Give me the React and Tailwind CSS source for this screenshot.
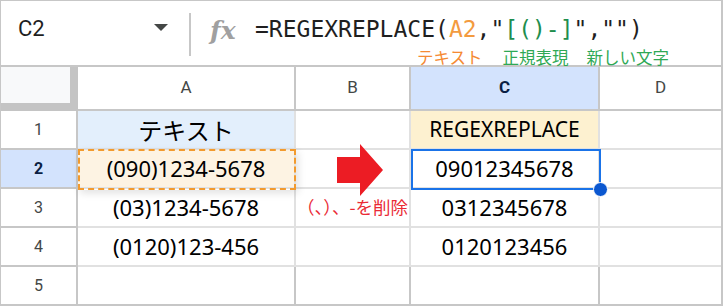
import React from 'react';

const hdrLine = 'border-[#c7c7c7]';
const gridLine = 'border-[#e1e1e1]';

const RowHeader = ({ n, active }) => (
  <div
    className={`w-[77px] shrink-0 flex items-center justify-center border-r-2 border-b-2 ${hdrLine} text-[16px] font-['Roboto'] ${
      active ? 'bg-[#d3e3fd] text-[#0b1f44] font-bold' : 'text-[#444746]'
    }`}
  >
    {n}
  </div>
);

const Cell = ({ w, children, className = '', last, noRight }) => (
  <div
    className={`${w} shrink-0 flex items-center justify-center border-b-2 ${noRight ? '' : 'border-r-2'} ${
      last ? hdrLine : gridLine
    } ${className}`}
  >
    {children}
  </div>
);

const Row = ({ n, active, last, cells }) => (
  <div className="flex h-[39px]">
    <RowHeader n={n} active={active} />
    <Cell w="w-[218px]" last={last} className={cells[0].cls}>{cells[0].body}</Cell>
    <Cell w="w-[115px]" last={last} className={cells[1].cls}>{cells[1].body}</Cell>
    <Cell w="w-[189px]" last={last} className={cells[2].cls}>{cells[2].body}</Cell>
    <Cell w="flex-1" last={last} noRight className={cells[3].cls}>{cells[3].body}</Cell>
  </div>
);

const num = "font-['Noto_Sans','Noto_Sans_CJK_JP',sans-serif] text-[22px] text-black";
const empty = { cls: '', body: null };

export default function App() {
  return (
    <div className="w-[724px] h-[307px] bg-white overflow-hidden">
      <div className="relative w-[723px] border-l border-t border-r-2 border-[#c7c7c7]">
        {/* Formula bar */}
        <div className={`flex h-[66px] border-b-2 ${hdrLine}`}>
          <div className="w-[188px] flex items-start pl-[17px] pt-[14px]">
            <span className="text-[22px] font-['Roboto'] text-[#1f1f1f] leading-[28px]">C2</span>
            <span className="ml-auto mr-[21px] mt-[9px] w-0 h-0 border-l-[7px] border-r-[7px] border-t-[7px] border-l-transparent border-r-transparent border-t-[#444746]" />
          </div>
          <div className="w-[2px] h-[43px] mt-[12px] bg-[#c7c7c7]" />
          <div className="w-[64px] pl-[19px] pt-[15px]">
            <span className="font-['DejaVu_Serif'] italic font-bold text-[25px] leading-[30px] text-[#a0a0a0]">fx</span>
          </div>
          <div className="flex flex-col pt-[14px]">
            <div className="font-['DejaVu_Sans_Mono'] text-[23px] leading-[28px] text-[#1f1f1f] whitespace-pre">
              {'=REGEXREPLACE('}
              <span className="text-[#f39b3f]">A2</span>
              {',"'}
              <span className="text-[#1e8e4e]">[()-]</span>
              {'","")'}
            </div>
            <div className="flex pl-[162px] mt-[4px] font-['Noto_Sans_CJK_JP',sans-serif] text-[16.5px] leading-[20px]">
              <span className="text-[#f58a33]">テキスト</span>
              <span className="ml-[20px] text-[#2fa955]">正規表現</span>
              <span className="ml-[18px] text-[#2fa955]">新しい文字</span>
            </div>
          </div>
        </div>

        {/* Column headers */}
        <div className="flex h-[44px] font-['Roboto'] text-[17px] text-[#444746]">
          <div className="w-[77px] shrink-0 bg-[#f8f9fa] border-r-[8px] border-b-[8px] border-[#c4c4c4]" />
          <div className={`w-[218px] shrink-0 flex items-center justify-center border-r-2 border-b-2 ${hdrLine}`}>A</div>
          <div className={`w-[115px] shrink-0 flex items-center justify-center border-r-2 border-b-2 ${hdrLine}`}>B</div>
          <div className={`w-[189px] shrink-0 flex items-center justify-center border-r-2 border-b-2 ${hdrLine} bg-[#d3e3fd] text-[#0b1f44] font-bold`}>C</div>
          <div className={`flex-1 flex items-center justify-center border-b-2 ${hdrLine}`}>D</div>
        </div>

        <Row
          n="1"
          cells={[
            { cls: 'bg-[#e3effc]', body: <span className="font-['Noto_Sans_CJK_JP',sans-serif] text-[24px] text-black">テキスト</span> },
            empty,
            { cls: 'bg-[#fdf1d0]', body: <span className="font-['Noto_Sans',sans-serif] text-[21px] text-black">REGEXREPLACE</span> },
            empty,
          ]}
        />
        <Row
          n="2"
          active
          cells={[
            { cls: 'bg-[#fdf3e3]', body: <span className={num}>(090)1234-5678</span> },
            empty,
            { cls: '', body: <span className={num}>09012345678</span> },
            empty,
          ]}
        />
        <Row
          n="3"
          cells={[
            { cls: '', body: <span className={num}>(03)1234-5678</span> },
            { cls: '', body: <span className="font-['Noto_Sans_CJK_JP',sans-serif] text-[17.5px] text-[#ea2a35] whitespace-nowrap">（、）、-を削除</span> },
            { cls: '', body: <span className={num}>0312345678</span> },
            empty,
          ]}
        />
        <Row
          n="4"
          cells={[
            { cls: '', body: <span className={num}>(0120)123-456</span> },
            empty,
            { cls: '', body: <span className={num}>0120123456</span> },
            empty,
          ]}
        />
        <Row n="5" last cells={[empty, empty, empty, empty]} />

        {/* A2 copy marquee */}
        <div className="absolute left-[77px] top-[148px] w-[218px] h-[41px] border-2 border-dashed border-[#f29a2e] shadow-[2px_3px_8px_rgba(0,0,0,0.12)] pointer-events-none" />

        {/* C2 selection */}
        <div className="absolute left-[410px] top-[148px] w-[190px] h-[41px] border-2 border-[#1a73e8] pointer-events-none" />
        <div className="absolute left-[592px] top-[181px] w-[15px] h-[15px] rounded-full bg-[#0b57d0] border border-white" />

        {/* Arrow */}
        <svg className="absolute left-[336px] top-[143px]" width="46" height="52" viewBox="0 0 46 52">
          <polygon points="0,13 23,13 23,0 46,26 23,52 23,39 0,39" fill="#ec1c24" />
        </svg>
      </div>
    </div>
  );
}
